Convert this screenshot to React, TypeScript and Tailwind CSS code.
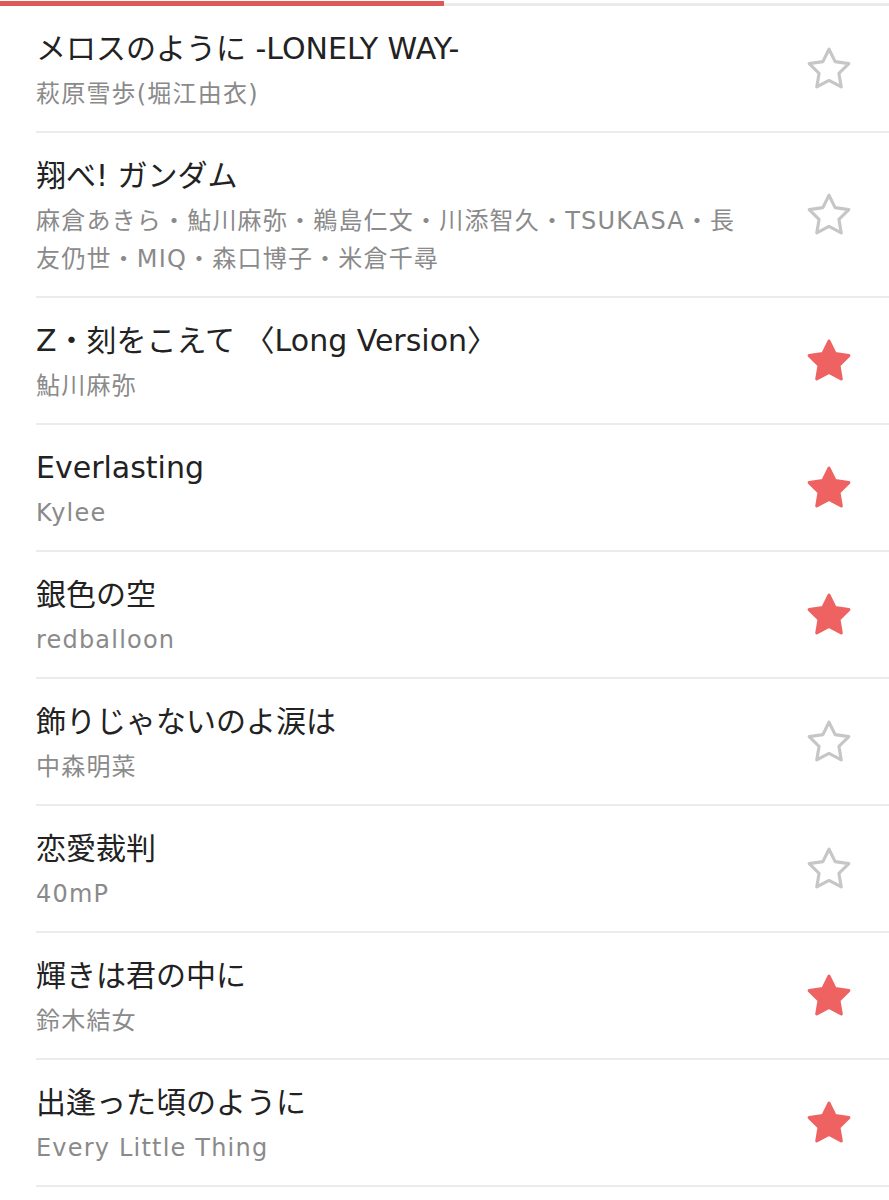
import React from "react";

type Song = { title: string; artist: string; fav: boolean };

const songs: Song[] = [
  { title: "メロスのように -LONELY WAY-", artist: "萩原雪歩(堀江由衣)", fav: false },
  {
    title: "翔べ! ガンダム",
    artist: "麻倉あきら・鮎川麻弥・鵜島仁文・川添智久・TSUKASA・長友仍世・MIQ・森口博子・米倉千尋",
    fav: false,
  },
  { title: "Z・刻をこえて 〈Long Version〉", artist: "鮎川麻弥", fav: true },
  { title: "Everlasting", artist: "Kylee", fav: true },
  { title: "銀色の空", artist: "redballoon", fav: true },
  { title: "飾りじゃないのよ涙は", artist: "中森明菜", fav: false },
  { title: "恋愛裁判", artist: "40mP", fav: false },
  { title: "輝きは君の中に", artist: "鈴木結女", fav: true },
  { title: "出逢った頃のように", artist: "Every Little Thing", fav: true },
];

const STAR =
  "24,5 29.88,16.91 43.02,18.82 33.51,28.09 35.76,41.18 24,35 12.24,41.18 14.49,28.09 4.98,18.82 18.12,16.91";

function Star({ filled }: { filled: boolean }) {
  return (
    <svg width="50" height="50" viewBox="0 0 48 48" className="block">
      <polygon
        points={STAR}
        fill={filled ? "#ee6262" : "none"}
        stroke={filled ? "#ee6262" : "#c6c6c6"}
        strokeWidth={3}
        strokeLinejoin="round"
      />
    </svg>
  );
}

export default function App() {
  return (
    <div
      className="w-[889px] min-h-[1200px] bg-white"
      style={{ fontFamily: '"DejaVu Sans", "Noto Sans CJK JP", sans-serif' }}
    >
      <div className="relative h-[6px]">
        <div className="absolute bottom-0 left-0 h-[3px] w-full bg-[#ebebeb]" />
        <div className="absolute top-[1px] left-0 h-[5px] w-[444px] bg-[#df5858]" />
      </div>
      <ul>
        {songs.map((s, i) => (
          <li
            key={i}
            className="ml-[36px] flex items-center border-b-2 border-[#ebebeb] pr-[35px]"
          >
            <div className="min-w-0 flex-1 pt-[23px] pb-[18px]">
              <div className="text-[30px] leading-[40px] text-[#222222] whitespace-nowrap">
                {s.title}
              </div>
              <div className="mt-[6px] text-[24px] leading-[38px] tracking-[1.2px] text-[#8a8a8a]">
                {s.artist}
              </div>
            </div>
            <div className="ml-[58px] w-[50px] shrink-0">
              <Star filled={s.fav} />
            </div>
          </li>
        ))}
      </ul>
    </div>
  );
}
